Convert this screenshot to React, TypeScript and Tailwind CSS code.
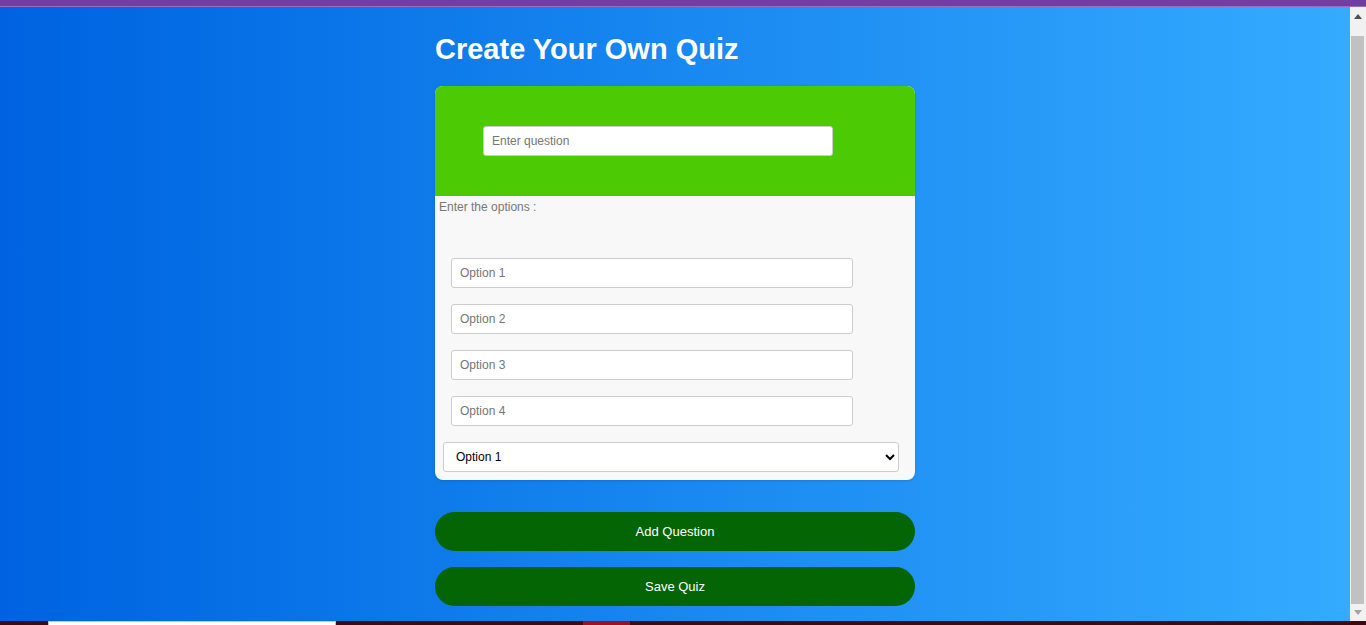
import React from "react";

const options = ["Option 1", "Option 2", "Option 3", "Option 4"];

const QuizCard: React.FC = () => {
  return (
    <div className="rounded-lg overflow-hidden bg-[#f8f8f8] shadow-sm">
      {/* Question header */}
      <div className="h-[110px] bg-[#4ccb04] pt-[40px] pl-[48px]">
        <input
          type="text"
          placeholder="Enter question"
          className="w-[350px] h-[30px] rounded-[3px] border border-[#cccccc] bg-white px-2 text-xs text-black placeholder:text-[#757575] outline-none"
        />
      </div>

      {/* Options */}
      <div className="pt-[4px] pb-2">
        <p className="pl-1 text-xs leading-[15px] text-[#777777]">Enter the options :</p>
        <div className="mt-[43px] flex flex-col gap-4 pl-4">
          {options.map((o) => (
            <input
              key={o}
              type="text"
              placeholder={o}
              className="w-[402px] h-[30px] rounded-[3px] border border-[#cccccc] bg-white px-2 text-xs text-black placeholder:text-[#757575] outline-none"
            />
          ))}
        </div>
        <div className="mt-4 pl-2">
          <select className="w-[456px] h-[30px] rounded-[3px] border border-[#cccccc] bg-white px-2 text-xs text-black outline-none">
            {options.map((o) => (
              <option key={o}>{o}</option>
            ))}
          </select>
        </div>
      </div>
    </div>
  );
};

const Scrollbar: React.FC = () => (
  <div className="w-4 bg-[#f1f1f1] flex flex-col">
    <div className="h-[29px] flex justify-center pt-[7px]">
      <svg width="8" height="5" viewBox="0 0 8 5">
        <polygon points="0,5 4,0 8,5" fill="#505050" />
      </svg>
    </div>
    <div className="flex-1 ml-px mr-[2px] bg-[#c1c1c1]" />
    <div className="h-[17px] flex justify-center pt-[6px]">
      <svg width="8" height="5" viewBox="0 0 8 5">
        <polygon points="0,0 8,0 4,5" fill="#a3a3a3" />
      </svg>
    </div>
  </div>
);

export default function App() {
  return (
    <div className="w-[1366px] h-[625px] flex flex-col overflow-hidden font-['Liberation_Sans',Arial,sans-serif]">
      <div className="h-[7px] bg-[#7040a0] border-b border-[#9a6cc4]" />

      <div className="flex flex-1 min-h-0">
        <main className="flex-1 bg-gradient-to-r from-[#0062e0] to-[#34abff] overflow-hidden">
          <div className="w-[480px] mx-auto pt-[26px]">
            <h1 className="text-[29px] leading-[33px] font-bold text-white">
              Create Your Own Quiz
            </h1>

            <div className="mt-[20px]">
              <QuizCard />
            </div>

            <div className="mt-8 flex flex-col gap-4">
              <button className="h-[39px] rounded-full bg-[#036503] text-[13px] text-white">
                Add Question
              </button>
              <button className="h-[39px] rounded-full bg-[#036503] text-[13px] text-white">
                Save Quiz
              </button>
            </div>
          </div>
        </main>
        <Scrollbar />
      </div>

      {/* Taskbar strip */}
      <div className="h-1 flex bg-[#3c0a12]">
        <div className="w-12" />
        <div className="w-[288px] bg-white border-t border-x border-[#c8c8c8]" />
        <div className="w-[247px]" />
        <div className="w-[47px] bg-[#9c1020]" />
      </div>
    </div>
  );
}
